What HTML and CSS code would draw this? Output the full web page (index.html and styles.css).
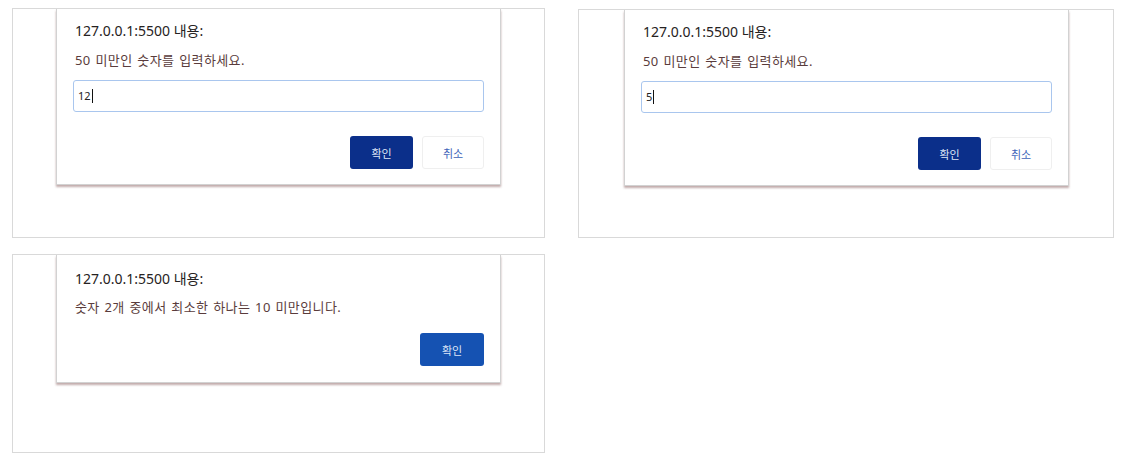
FILE: index.html
```html
<!DOCTYPE html>
<html lang="ko">
<head>
    <meta charset="UTF-8">
    <title>prompt / alert</title>
    <link rel="stylesheet" href="styles.css">
</head>
<body>
<div class="sheet">
    <div class="panel panel-a">
        <div class="dialog">
            <p class="title">127.0.0.1:5500 내용:</p>
            <p class="message">50 미만인 숫자를 입력하세요.</p>
            <div class="field">12<span class="caret"></span></div>
            <div class="actions">
                <span class="btn btn-ok">확인</span>
                <span class="btn btn-cancel">취소</span>
            </div>
        </div>
    </div>

    <div class="panel panel-b">
        <div class="dialog">
            <p class="title">127.0.0.1:5500 내용:</p>
            <p class="message">50 미만인 숫자를 입력하세요.</p>
            <div class="field">5<span class="caret"></span></div>
            <div class="actions">
                <span class="btn btn-ok">확인</span>
                <span class="btn btn-cancel">취소</span>
            </div>
        </div>
    </div>

    <div class="panel panel-c">
        <div class="dialog dialog-alert">
            <p class="title">127.0.0.1:5500 내용:</p>
            <p class="message">숫자 2개 중에서 최소한 하나는 10 미만입니다.</p>
            <div class="actions">
                <span class="btn btn-ok btn-alert">확인</span>
            </div>
        </div>
    </div>
</div>
</body>
</html>
```

FILE: styles.css
```css
html, body, div, p, span {
    margin: 0;
    padding: 0;
}

body {
    background: #fff;
    font-family: "Noto Sans", "Noto Sans CJK KR", sans-serif;
    color: #2a2a2a;
}

.sheet {
    display: grid;
    grid-template-columns: 533px 536px;
    grid-template-rows: 230px 199px;
    column-gap: 33px;
    row-gap: 16px;
    padding: 8px 0 0 12px;
}

.panel {
    border: 1px solid #d9d9d9;
    padding-left: 43px;
}

.panel-b {
    margin-top: 1px;
    padding-left: 45px;
}

.dialog {
    width: 445px;
    box-sizing: border-box;
    border: 1px solid #d2d2d2;
    border-top: none;
    box-shadow: 0 2px 2px rgba(120, 70, 70, 0.45);
    padding: 12px 16px 15px 16px;
    background: #fff;
}

.title {
    font-size: 14px;
    line-height: 20px;
    padding-left: 2px;
    color: #262222;
}

.message {
    margin-top: 11px;
    padding-left: 2px;
    font-size: 13px;
    line-height: 16px;
    letter-spacing: 0.4px;
    word-spacing: 1px;
    color: #5a3c3c;
}

.field {
    margin-top: 12px;
    height: 32px;
    box-sizing: border-box;
    border: 1px solid #a9c6ee;
    border-radius: 3px;
    padding-left: 4px;
    font-size: 11px;
    line-height: 30px;
    color: #222;
}

.caret {
    display: inline-block;
    width: 1px;
    height: 14px;
    margin-left: 1px;
    vertical-align: -3px;
    background: #111;
}

.actions {
    display: flex;
    justify-content: flex-end;
    gap: 9px;
    margin-top: 24px;
}

.btn {
    display: flex;
    align-items: center;
    justify-content: center;
    width: 63px;
    height: 33px;
    box-sizing: border-box;
    border-radius: 3px;
    font-size: 11px;
}

.btn-ok {
    background: #0b2f8a;
    color: #dfe6f7;
}

.btn-cancel {
    width: 62px;
    border: 1px solid #efefef;
    color: #3d63b8;
}

.dialog-alert {
    padding-top: 14px;
    padding-bottom: 16px;
}

.dialog-alert .message {
    margin-top: 10px;
}

.dialog-alert .actions {
    margin-top: 18px;
}

.btn-alert {
    width: 64px;
    background: #1552b2;
}
```
